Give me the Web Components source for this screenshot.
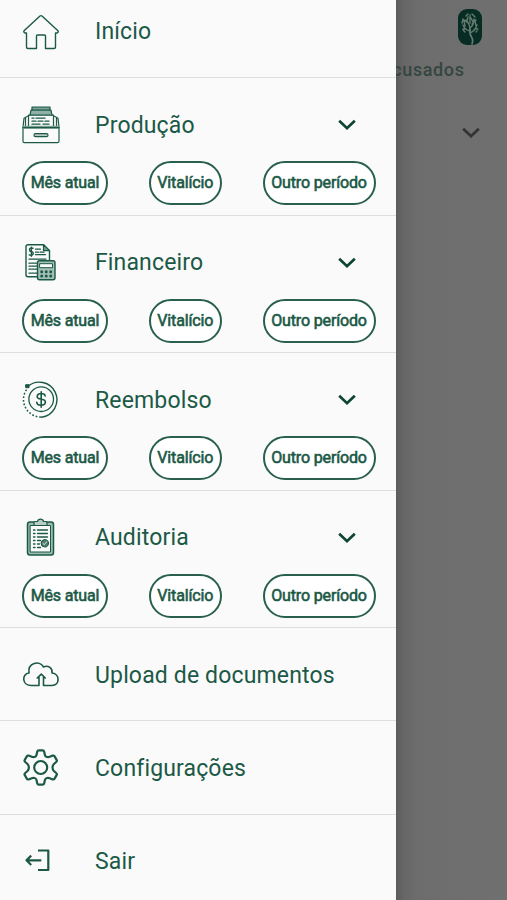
<!DOCTYPE html>
<html lang="pt-BR">
<head>
<meta charset="utf-8">
<title>Menu</title>
<style>
html,body{margin:0;height:100%;overflow:hidden}
body{font-family:Roboto,"Liberation Sans",sans-serif;color:#1b5946;background:#6e6e6e}
</style>
</head>
<body>
<app-shell></app-shell>
<script>
const icons={
home:'<path d="M4.500 20v14q0 1.500 1.500 1.500h8.500V23q0-1 1-1h7q1 0 1 1V35.500H32q1.500 0 1.500-1.500v-14M4.500 20H2.800Q1 19 2.300 17.500L18 3q1-.8 2 0L35.700 17.500q1.300 1.500-.5 2.500h-1.700" stroke-width="1.400"/>',
files:'<g transform="translate(0 -.8)"><path d="M10 5V1.800h18V5" fill="#78a194" stroke-width="1.200"/><path d="M8 10l1-5h20l1 5" fill="#8fb1a7" stroke-width="1.200"/><path d="M6.500 21V10h25v11" stroke-width="1.200"/><path d="M10 13h2m2 0h9M10 16h4m2 0h5m2 0h4M10 19h8m3 0h6" stroke-width="1.300"/><path d="M5.500 11 2 13 1 22v14q0 1.500 1.500 1.500h33Q37 37.500 37 36V22l-1-9-3.500-2M3.500 13v8m31-8v8" stroke-width="1.200"/><path d="M1.500 20.500h35v3h-35z" fill="#78a194" stroke="none"/><path d="M1 22.500h36" stroke-width="1.300"/><rect x="12" y="28.500" width="14" height="3" rx="1.500" fill="#b5cac3" stroke-width="1.200"/></g>',
finance:'<g transform="translate(0 -.8)"><path d="M16 33.500H6Q4 33.500 4 31.500v-28Q4 1.500 6 1.500h15.500l6 6v9" stroke-width="1.400"/><path d="M21.500 1.500v6h6z" fill="#78a194" stroke-width="1.200"/><path d="M11 5q-3.500-.8-3.500 1.200T9.500 8.500t1.700 2.100-3.900 1.200M9.400 4v9" stroke-width="1.400"/><path d="M13.500 6h5m-5 3h3m1.500 0h4m-8.500 2.500h10M7 16h17" stroke-width="1.200"/><path d="M7 20h8m-8 3h8m-8 3h8m-8 4h8" stroke-width="1.300" stroke-dasharray="2 1"/><rect x="15.500" y="17.500" width="17.500" height="19" rx="2" fill="#a3bfb6" stroke-width="1.400"/><rect x="18" y="20.500" width="12.500" height="4" fill="#fafafa" stroke-width="1"/><path d="M19.700 28.500h.01m4.500 0h.01m4.500 0h.01M19.700 32.800h.01m4.500 0h.01m4.500 0h.01" stroke-width="3"/></g>',
refund:'<g transform="translate(.5 -.8)"><path d="M5 6.500A17.600 17.600 0 1 1 19 37" stroke-width="1.400"/><path d="M4 9.500A17.500 17.500 0 0 0 19 36.800" stroke-width="1.500" stroke-dasharray="1.700 1.900" stroke-linecap="butt"/><circle cx="18.700" cy="19" r="12.300" stroke-width="1.300"/><path d="M3.500 4.500h3v3h-3z" fill="currentColor" stroke-width="1"/><path d="M22.700 15.700q-.5-2.400-4-2.400t-4 2.600 4 3.100 4.200 3.200-4.200 2.900-4.500-2.900M18.700 11.500v15.500" stroke-width="1.600"/></g>',
audit:'<g transform="translate(-.5 -1)"><rect x="6" y="4" width="26" height="33" rx="2.500" fill="#9cbcb2" stroke-width="1.500"/><path d="M9 7.500h20V34H9z" fill="#fafafa" stroke-width="1"/><path d="M12.500 7.500V4.500q0-1 1-1H16q.5-2.300 3-2.300T22 3.500h2.500q1 0 1 1v3z" fill="#b8cdc6" stroke-width="1.200"/><path d="M12 12h1.500m2.500 0h10M12 15.500h1.500m2.500 0h10M12 19h1.500m2.500 0h10M12 22.500h1.500m2.500 0h3M12 26h1.500m2.500 0h2M12 29.500h1.500m2.500 0h3" stroke-width="1.300"/><circle cx="23.300" cy="25.300" r="3.700" fill="#4e7d6f" stroke-width="1"/><path d="m21.500 25.500 1.300 1.200 2.400-3" stroke="#dbe6e2" stroke-width="1"/></g>',
cloud:'<path d="M17 29.500H9.500C-.5 29.500-.3 17.600 7 17 5.500 7 17.500 3.800 21.500 11c5-2.300 9.200 1.600 8.500 6 8.200 1 8 12.500 0 12.500h-8.500M17 29.500V21m4.500 8.500V21m-6.300 1 4.050-3.800L23.300 22" stroke-width="1.600"/>',
gear:'<g transform="translate(-.8 -.5)"><path d="M15.300 6.500 16 3.200Q16.300 1.800 17.700 1.800h3.600q1.400 0 1.700 1.400l.7 3.300q.4 1.700 2 2t2.800-.2l3-1.200q1.200-.4 1.900.8l2 3.500q.7 1.200-.4 2.100l-2.300 2Q31.300 17 31.300 19t1.400 3.500l2.300 2q1.100.9.400 2.100l-2 3.500q-.7 1.200-1.900.8l-3-1.200q-1.200-.5-2.800-.2t-2 2l-.7 3.300q-.3 1.400-1.700 1.400h-3.600q-1.400 0-1.700-1.400l-.7-3.300q-.4-1.700-2-2t-2.800.2l-3 1.200q-1.200.4-1.900-.8l-2-3.500q-.7-1.200.4-2.100l2.300-2Q7.700 21 7.700 19t-1.400-3.500l-2.300-2q-1.100-.9-.4-2.100l2-3.500q.7-1.200 1.900-.8l3 1.200q1.200.5 2.800.2t2-2z" stroke-width="2.200"/><circle cx="19.500" cy="19" r="6.500" stroke-width="2.200"/></g>',
exit:'<path d="M16 7.500h10.300v19.500H16M19.300 17.300H5m4.200-4.700-4.700 4.700 4.700 4.700" stroke-width="2.200" stroke-linecap="butt"/>',
chev:'<path d="m11.200 14.700 7.800 7.500 7.800-7.500" stroke-width="2.700" stroke-linecap="butt" stroke-linejoin="miter"/>'
};
class UiIcon extends HTMLElement{
 connectedCallback(){
  this.attachShadow({mode:'open'}).innerHTML=`<style>:host{display:block;width:38px;height:38px;flex:none}svg{display:block;width:100%;height:100%;overflow:visible}</style><svg viewBox="0 0 38 38" fill="none" stroke="currentColor" stroke-linecap="round" stroke-linejoin="round">${icons[this.getAttribute('name')]}</svg>`;
 }
}
customElements.define('ui-icon',UiIcon);

class PeriodPill extends HTMLElement{
 constructor(){super();this.attachShadow({mode:'open'}).innerHTML=`<style>
 :host{display:flex;align-items:center;justify-content:center;box-sizing:border-box;height:44px;border:2px solid #285f4d;border-radius:22px;background:#fff;font-size:16px;font-weight:400;white-space:nowrap;letter-spacing:-.15px;-webkit-text-stroke:.6px currentColor;padding-bottom:1px}
 </style><slot></slot>`}
}
customElements.define('period-pill',PeriodPill);

class MenuItem extends HTMLElement{
 connectedCallback(){
  this.attachShadow({mode:'open'}).innerHTML=`<style>
  :host{display:block;box-sizing:border-box;height:93.300px;border-bottom:1.500px solid #dedede;flex:none}
  :host([first]){height:78px}
  :host([group]){height:137.500px}
  :host(:last-child){border:0}
  .head{display:flex;align-items:center;height:94px;padding:0 30.500px 0 21.500px}
  :host([first]) .head{height:63px}
  .label{flex:1;margin-left:35.500px;padding-top:1.500px;font-size:23px;line-height:30px;letter-spacing:.15px;white-space:nowrap}
  .label+ui-icon{color:#0d4434}
  .pills{display:flex;justify-content:space-between;margin-top:-11px;padding:0 20.500px 0 22px}
  </style><div class="head"><ui-icon name="${this.getAttribute('icon')}"></ui-icon><div class="label"><slot></slot></div>${this.hasAttribute('group')?'<ui-icon name="chev"></ui-icon>':''}</div>${this.hasAttribute('group')?'<div class="pills"><slot name="pill"></slot></div>':''}`;
 }
}
customElements.define('menu-item',MenuItem);

class SideDrawer extends HTMLElement{
 constructor(){super();this.attachShadow({mode:'open'}).innerHTML=`<style>
 :host{display:flex;flex-direction:column;box-sizing:border-box;background:#fafafa;overflow:hidden}
 </style><slot></slot>`}
}
customElements.define('side-drawer',SideDrawer);

class BrandLogo extends HTMLElement{
 constructor(){super();this.attachShadow({mode:'open'}).innerHTML=`<style>:host{display:block;width:24px;height:36px}svg{display:block}</style>
 <svg width="24" height="36" viewBox="0 0 24 36" fill="none" stroke="#647b70" stroke-linecap="round"><rect width="24" height="36" rx="9" fill="#062c23" stroke="none"/><path d="M14 35q1.500-4-.5-7t-1.500-8" stroke-width="1.700"/><path d="M12 21q0-6-4-10m4 8q4-3 4-9m-4 12q-5-1-7-6m7 8q5-2 7-8M12 14V6m-3 6 1-4m5 5-2-4m-6 8-1-5m12 5-1-6M8 20H5m13 0h2M10 5 8 7m6-2 3 3M5 10l-1 4m3 9-2-2m13 2 1-1M10 14l-4-3m8 4 4-4" stroke-width="1.400"/></svg>`}
}
customElements.define('brand-logo',BrandLogo);

class AppShell extends HTMLElement{
 constructor(){
  super();
  const group=(icon,label,first='Mês atual')=>`<menu-item group icon="${icon}">${label}<period-pill slot="pill" style="width:86px">${first}</period-pill><period-pill slot="pill" style="width:73px">Vitalício</period-pill><period-pill slot="pill" style="width:113px">Outro período</period-pill></menu-item>`;
  this.attachShadow({mode:'open'}).innerHTML=`<style>
  :host{display:grid;grid-template-columns:396px 111px;height:900px;width:507px;overflow:hidden}
  side-drawer{z-index:1}
  .page{display:flex;flex-direction:column;align-items:flex-end;background:linear-gradient(90deg,#5c5c5c,#676767 8px,#6d6d6d 22px,#707070)}
  brand-logo{margin:9px 25px 0 0}
  .tab{margin:14px 42.500px 0 0;font-size:18px;line-height:22px;font-weight:500;letter-spacing:.6px;color:#34463f}
  .page ui-icon{margin:32.500px 17px 0 0;color:#333}
  </style><side-drawer>
  <menu-item first icon="home">Início</menu-item>
  ${group('files','Produção')}${group('finance','Financeiro')}${group('refund','Reembolso','Mes atual')}${group('audit','Auditoria')}
  <menu-item icon="cloud">Upload de documentos</menu-item>
  <menu-item icon="gear">Configurações</menu-item>
  <menu-item icon="exit">Sair</menu-item>
  </side-drawer><div class="page"><brand-logo></brand-logo><div class="tab">cusados</div><ui-icon name="chev"></ui-icon></div>`;
 }
}
customElements.define('app-shell',AppShell);
</script>
</body>
</html>
